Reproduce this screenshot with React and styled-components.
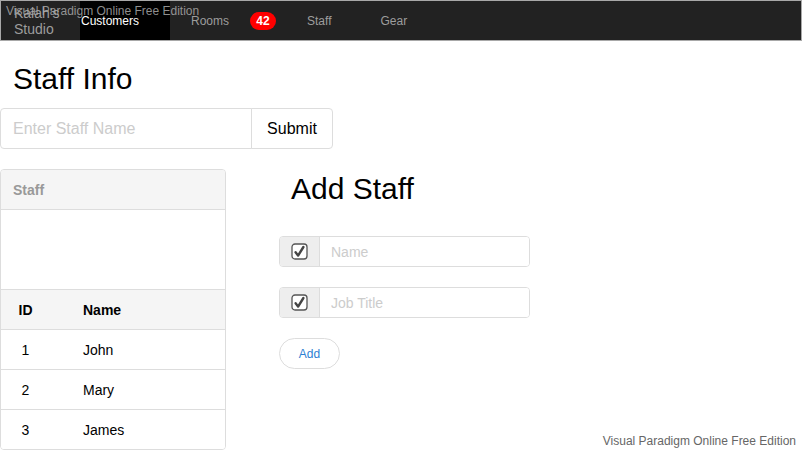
import React from "react";
import styled, { createGlobalStyle } from "styled-components";

const Global = createGlobalStyle`
  html, body { margin: 0; padding: 0; background: #fff; }
  body { font-family: "Liberation Sans", Arial, sans-serif; color: #000; }
  * { box-sizing: border-box; }
`;

const Page = styled.div`
  position: relative;
  width: 802px;
  height: 451px;
  overflow: hidden;
`;

const NavBar = styled.nav`
  display: flex;
  align-items: stretch;
  height: 41px;
  background: #222;
  border: 1px solid #a8a8a8;
`;

const Brand = styled.div`
  width: 79px;
  padding-left: 13px;
  display: flex;
  align-items: center;
  font-size: 14px;
  line-height: 16px;
  color: #9d9d9d;
`;

const NavItem = styled.div`
  display: flex;
  align-items: center;
  font-size: 12px;
  padding-left: ${(p) => p.$pl || 0}px;
  width: ${(p) => (p.$w ? `${p.$w}px` : "auto")};
  color: ${(p) => (p.$active ? "#fff" : "#9d9d9d")};
  background: ${(p) => (p.$active ? "#000" : "transparent")};
`;

const Badge = styled.span`
  align-self: center;
  margin-left: ${(p) => p.$ml}px;
  height: 18px;
  min-width: 26px;
  padding: 0 6px;
  border-radius: 9px;
  background: #f00;
  color: #fff;
  font-size: 12px;
  font-weight: bold;
  line-height: 18px;
  text-align: center;
`;

const Watermark = styled.div`
  position: absolute;
  font-size: 12px;
  line-height: 14px;
  white-space: nowrap;
  color: ${(p) => p.$color};
  ${(p) => (p.$top ? "top: 4px; left: 6px;" : "bottom: 3px; right: 6px;")}
  pointer-events: none;
`;

const Title = styled.h1`
  margin: 21px 0 12px 13px;
  font-size: 30px;
  line-height: 34px;
  font-weight: normal;
`;

const SearchRow = styled.div`
  display: flex;
  height: 41px;
`;

const SearchInput = styled.input`
  width: 252px;
  height: 41px;
  border: 1px solid #ddd;
  border-radius: 4px 0 0 4px;
  padding: 0 12px;
  font-size: 16px;
  font-family: inherit;
  outline: none;
  &::placeholder { color: #ccc; }
`;

const SubmitButton = styled.button`
  width: 82px;
  height: 41px;
  margin-left: -1px;
  border: 1px solid #ddd;
  border-radius: 0 4px 4px 0;
  background: #fff;
  font-size: 16px;
  font-family: inherit;
  color: #000;
`;

const Columns = styled.div`
  display: flex;
  margin-top: 20px;
`;

const Panel = styled.div`
  width: 226px;
  border: 1px solid #ddd;
  border-radius: 4px;
  overflow: hidden;
`;

const PanelHeading = styled.div`
  height: 40px;
  padding-left: 12px;
  display: flex;
  align-items: center;
  background: #f5f5f5;
  border-bottom: 1px solid #ddd;
  font-size: 14px;
  font-weight: bold;
  color: #999;
`;

const PanelBody = styled.div`
  height: 79px;
`;

const Row = styled.div`
  display: grid;
  grid-template-columns: 49px 1fr;
  align-items: center;
  height: 40px;
  border-top: 1px solid #ddd;
  font-size: 14px;
  font-weight: ${(p) => (p.$head ? "bold" : "normal")};
  background: ${(p) => (p.$head ? "#f5f5f5" : "#fff")};
`;

const IdCell = styled.div`
  text-align: center;
`;

const NameCell = styled.div`
  padding-left: 33px;
`;

const FormCol = styled.div`
  margin-left: 53px;
  display: flex;
  flex-direction: column;
  align-items: flex-start;
`;

const SubTitle = styled.h2`
  margin: 3px 0 30px 12px;
  font-size: 30px;
  line-height: 34px;
  font-weight: normal;
`;

const InputGroup = styled.div`
  display: flex;
  width: 251px;
  height: 31px;
  border: 1px solid #ddd;
  border-radius: 4px;
  overflow: hidden;
  margin-bottom: 20px;
`;

const Addon = styled.div`
  width: 40px;
  display: flex;
  align-items: center;
  justify-content: center;
  background: #eee;
  border-right: 1px solid #ddd;
`;

const GroupInput = styled.input`
  flex: 1;
  border: none;
  padding: 0 11px;
  font-size: 14px;
  font-family: inherit;
  outline: none;
  &::placeholder { color: #ccc; }
`;

const AddButton = styled.button`
  width: 61px;
  height: 31px;
  border: 1px solid #ddd;
  border-radius: 16px;
  background: #fff;
  color: #2d7fd3;
  font-size: 12px;
  font-family: inherit;
`;

const CheckIcon = () => (
  <svg width="17" height="17" viewBox="0 0 17 17">
    <rect x="1" y="1" width="15" height="15" rx="3" fill="#fff" stroke="#555" strokeWidth="1.3" />
    <path d="M4.6 9.3 L7.1 12.6 L12.4 4" fill="none" stroke="#444" strokeWidth="2.4" strokeLinecap="round" strokeLinejoin="round" />
  </svg>
);

const staff = [
  { id: 1, name: "John" },
  { id: 2, name: "Mary" },
  { id: 3, name: "James" },
];

export default function App() {
  return (
    <Page>
      <Global />
      <NavBar>
        <Brand>Kalah's Studio</Brand>
        <NavItem $active $pl={1} $w={90}>Customers</NavItem>
        <NavItem $pl={21}>Rooms</NavItem>
        <Badge $ml={21}>42</Badge>
        <NavItem $pl={31}>Staff</NavItem>
        <NavItem $pl={49}>Gear</NavItem>
      </NavBar>
      <Watermark $top $color="rgba(170,170,170,0.85)">Visual Paradigm Online Free Edition</Watermark>

      <Title>Staff Info</Title>
      <SearchRow>
        <SearchInput placeholder="Enter Staff Name" />
        <SubmitButton>Submit</SubmitButton>
      </SearchRow>

      <Columns>
        <Panel>
          <PanelHeading>Staff</PanelHeading>
          <PanelBody />
          <Row $head>
            <IdCell>ID</IdCell>
            <NameCell>Name</NameCell>
          </Row>
          {staff.map((s) => (
            <Row key={s.id}>
              <IdCell>{s.id}</IdCell>
              <NameCell>{s.name}</NameCell>
            </Row>
          ))}
        </Panel>

        <FormCol>
          <SubTitle>Add Staff</SubTitle>
          <InputGroup>
            <Addon><CheckIcon /></Addon>
            <GroupInput placeholder="Name" />
          </InputGroup>
          <InputGroup>
            <Addon><CheckIcon /></Addon>
            <GroupInput placeholder="Job Title" />
          </InputGroup>
          <AddButton>Add</AddButton>
        </FormCol>
      </Columns>

      <Watermark $color="#666">Visual Paradigm Online Free Edition</Watermark>
    </Page>
  );
}
